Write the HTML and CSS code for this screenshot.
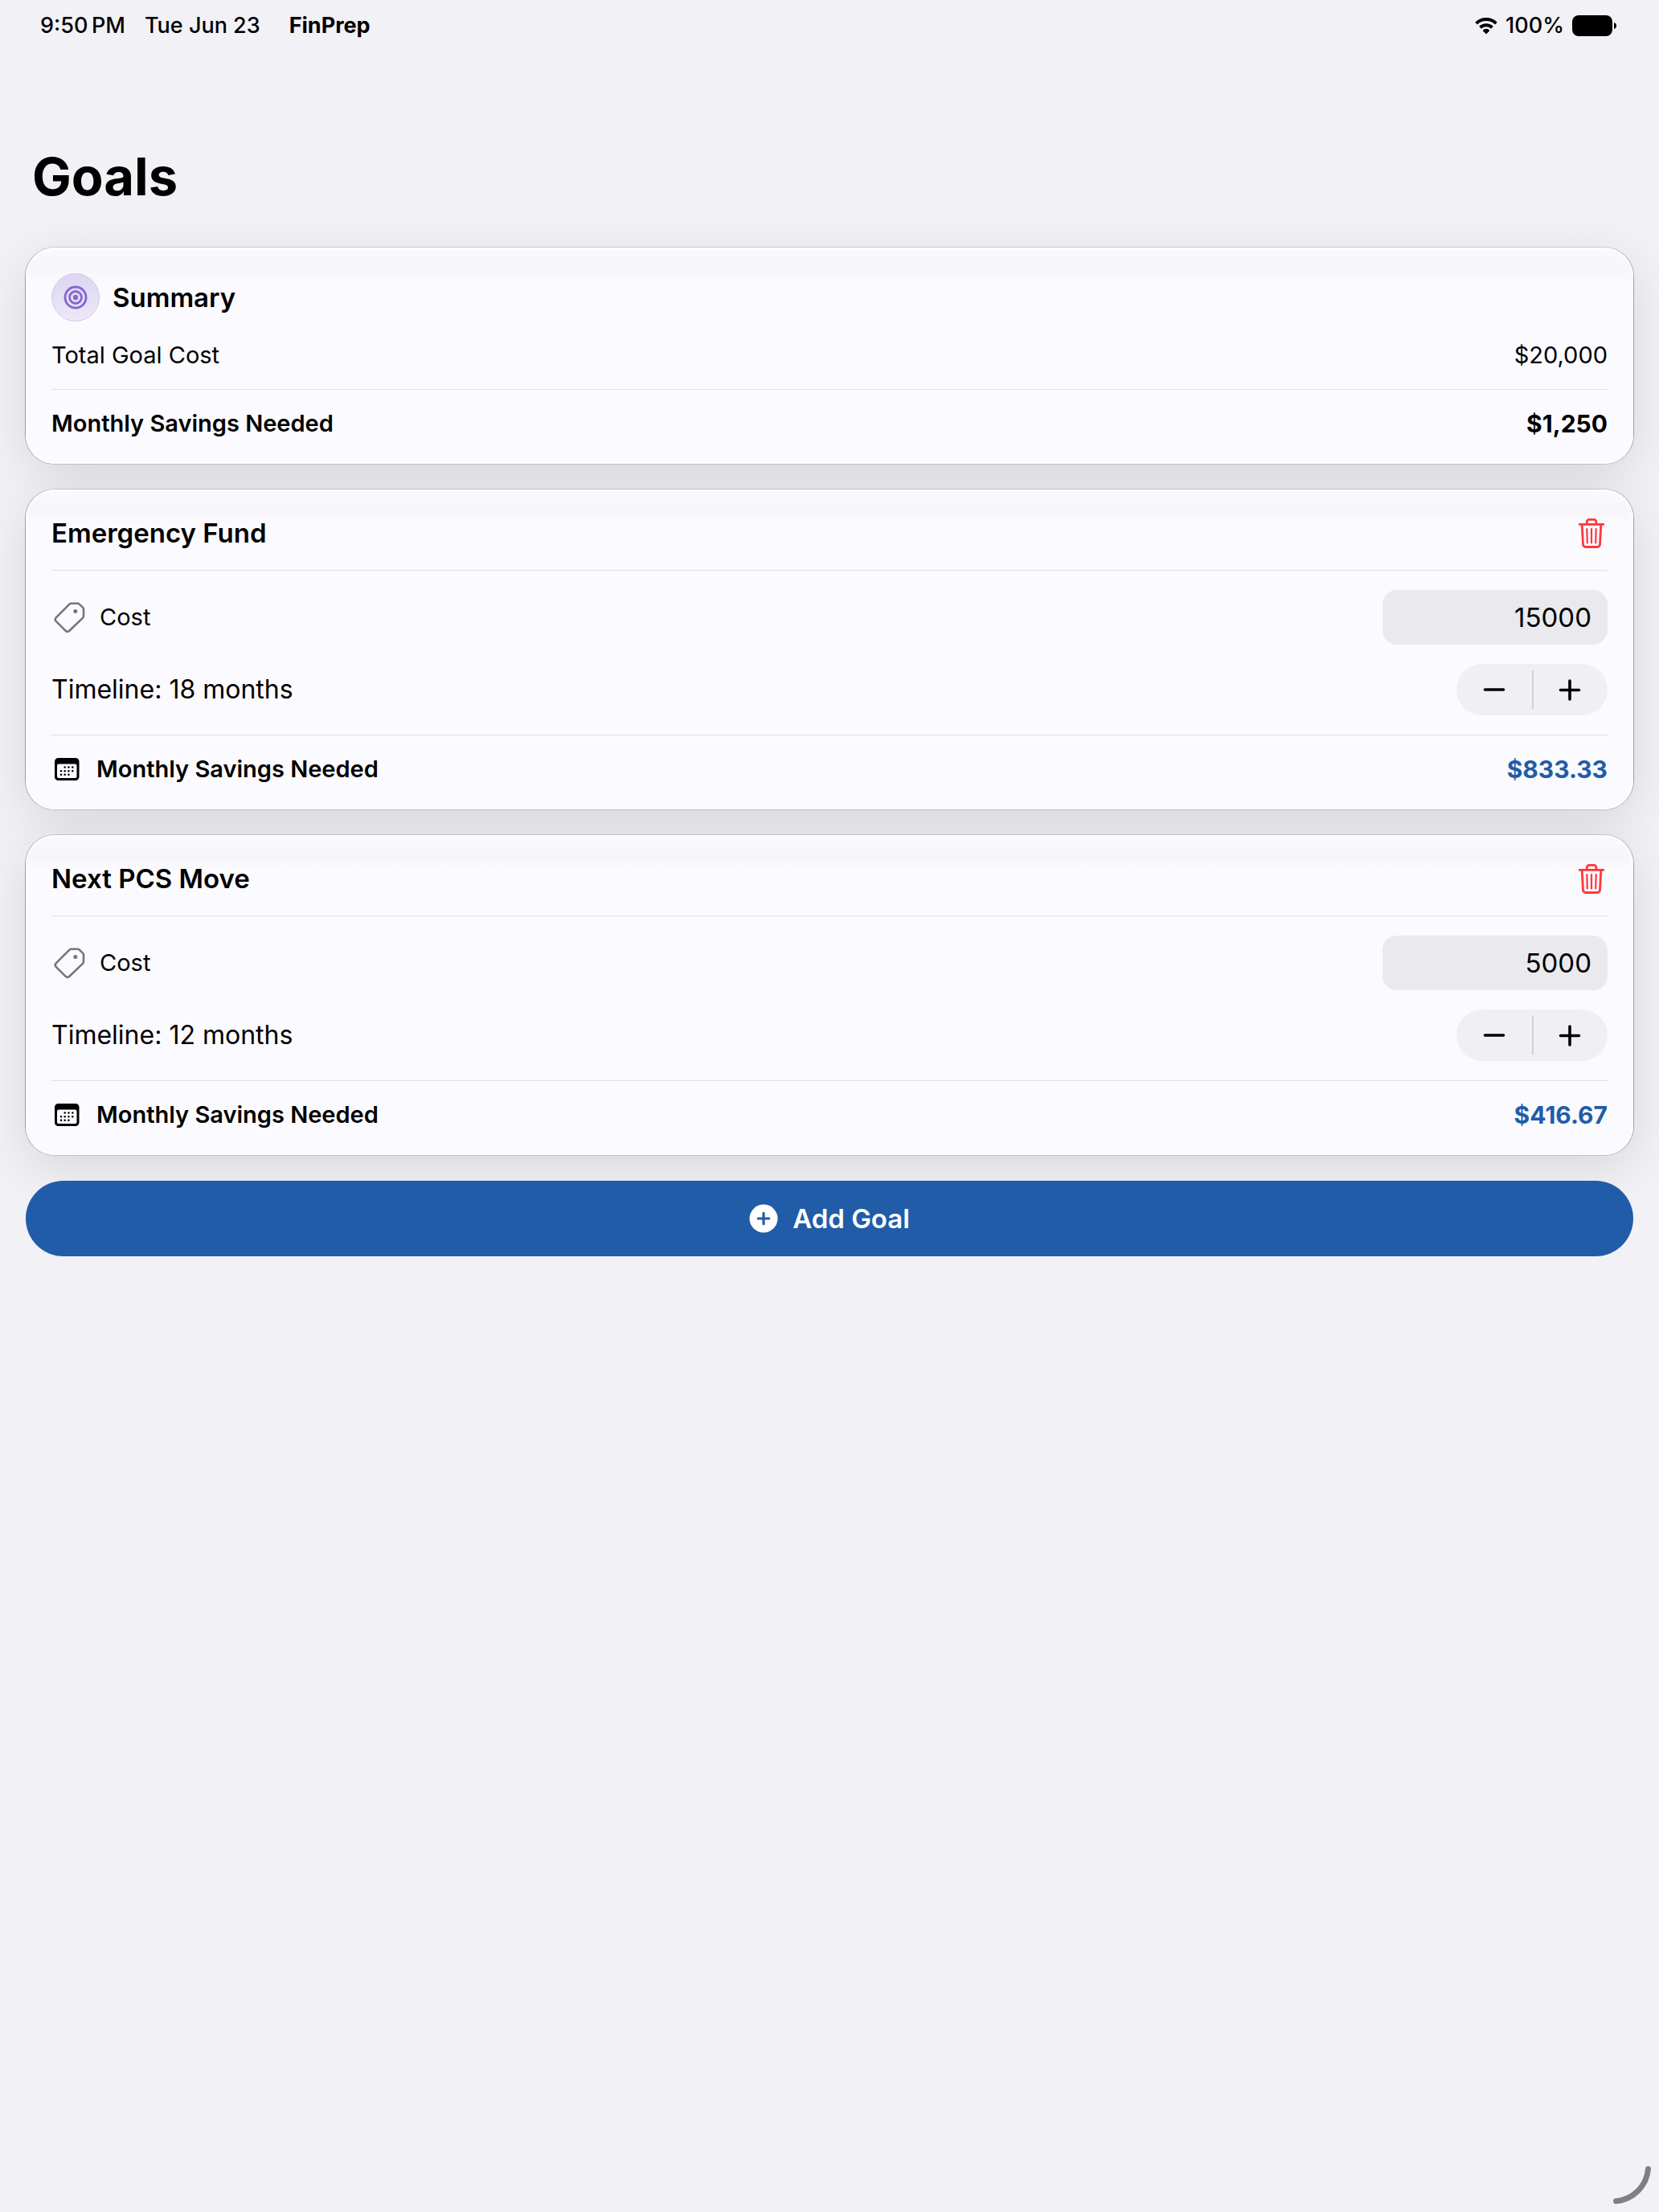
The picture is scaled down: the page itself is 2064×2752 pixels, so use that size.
FILE: index.html
```html
<!DOCTYPE html>
<html lang="en">
<head>
    <meta charset="UTF-8">
    <meta name="viewport" content="width=device-width, initial-scale=1.0">
    <title>FinPrep - Goals</title>
    <link rel="stylesheet" href="styles.css">
</head>
<body>
    <!-- icons shared by the goal cards -->
    <svg class="sprite" aria-hidden="true">
        <symbol id="icon-trash" viewBox="0 0 40 44">
            <g fill="none" stroke="currentColor" stroke-width="2.8" stroke-linecap="round" stroke-linejoin="round">
                <path d="M5.2 11.400h29.600"/>
                <path d="M14.300 11V8.200a2.800 2.800 0 0 1 2.800-2.800h6a2.800 2.800 0 0 1 2.800 2.800V11"/>
                <path d="M8.200 12l1.300 24.400a3.200 3.200 0 0 0 3.200 3.100h14.600a3.200 3.200 0 0 0 3.200-3.100L31.800 12"/>
                <path d="M14.300 17.200l.5 17.200M20 17.200v17.200M25.700 17.200l-.5 17.200" stroke-width="2.2"/>
            </g>
        </symbol>
        <symbol id="icon-tag" viewBox="0 0 44 44">
            <path d="M24.500 4.800h8.200q1.200 0 2 .8l4.400 4.300q.9.900.9 2.200v8.300q0 1.300-.9 2.200L22.300 38.800q-2.300 2-4.600 0L5.700 26.900q-2-2.200 0-4.500L22.400 5.600q.9-.8 2.100-.8z" fill="none" stroke="currentColor" stroke-width="2.600" stroke-linejoin="round"/>
            <circle cx="29.800" cy="14.600" r="2.500" fill="currentColor"/>
        </symbol>
        <symbol id="icon-calendar" viewBox="0 0 40 36">
            <path fill="currentColor" fill-rule="evenodd" d="M8.500 4h21.500a4.500 4.500 0 0 1 4.500 4.500v19a4.500 4.500 0 0 1-4.500 4.500H8.500a4.500 4.500 0 0 1-4.500-4.500v-19A4.500 4.500 0 0 1 8.500 4zM9 11.500a2 2 0 0 0-2 2V27a2 2 0 0 0 2 2h20.500a2 2 0 0 0 2-2V13.500a2 2 0 0 0-2-2z"/>
            <path fill="none" stroke="currentColor" stroke-width="2.600" stroke-linecap="round" d="M16.700 15.500h0M21.400 15.500h0M26.300 15.500h0M12 20.200h0M16.700 20.200h0M21.400 20.200h0M26.300 20.200h0M12 24.800h0M16.700 24.800h0M21.400 24.800h0"/>
        </symbol>
        <symbol id="icon-minus" viewBox="0 0 32 32">
            <path d="M4.500 16h23" stroke="currentColor" stroke-width="3.600" stroke-linecap="round"/>
        </symbol>
        <symbol id="icon-plus" viewBox="0 0 32 32">
            <path d="M4.500 16.500h23M16 5v23" stroke="currentColor" stroke-width="3.600" stroke-linecap="round"/>
        </symbol>
    </svg>

    <header class="status-bar">
        <div class="status-left">
            <span>9:50&#8201;PM</span>
            <span>Tue Jun 23</span>
            <strong class="app-name">FinPrep</strong>
        </div>
        <div class="status-right">
            <svg class="wifi" viewBox="0 0 28 22" aria-hidden="true">
                <g fill="none" stroke="#000" stroke-width="4">
                    <path d="M1.600 8.100a17.800 17.800 0 0 1 24.800 0"/>
                    <path d="M6.500 13.300a10.700 10.700 0 0 1 15 0"/>
                </g>
                <path d="M14 21l-4-4q4-3.400 8 0z" stroke="#000" stroke-width="1" stroke-linejoin="round"/>
            </svg>
            <span>100%</span>
            <svg class="battery" viewBox="0 0 56 26" aria-hidden="true">
                <rect width="50" height="26" rx="8"/>
                <path d="M52 9q3 1 3 4t-3 4z"/>
            </svg>
        </div>
    </header>

    <main>
        <h1>Goals</h1>

        <section class="card">
            <div class="summary-header">
                <span class="badge">
                    <svg viewBox="0 0 30 30" aria-hidden="true">
                        <g fill="none" stroke="currentColor" stroke-width="2.800">
                            <circle cx="15" cy="15" r="13"/>
                            <circle cx="15" cy="15" r="7.500"/>
                        </g>
                        <circle cx="15" cy="15" r="3.200" fill="currentColor"/>
                    </svg>
                </span>
                <h2>Summary</h2>
            </div>
            <div class="row">
                <span>Total Goal Cost</span>
                <span>$20,000</span>
            </div>
            <hr>
            <div class="row total">
                <span>Monthly Savings Needed</span>
                <span class="amount">$1,250</span>
            </div>
        </section>

        <section class="card">
            <div class="goal-header">
                <h2>Emergency Fund</h2>
                <button class="delete" aria-label="Delete Emergency Fund"><svg><use href="#icon-trash"/></svg></button>
            </div>
            <hr>
            <div class="row">
                <label class="with-icon" for="cost-1"><svg class="tag"><use href="#icon-tag"/></svg>Cost</label>
                <input class="cost" id="cost-1" type="text" inputmode="numeric" value="15000">
            </div>
            <div class="row timeline">
                <span>Timeline: 18 months</span>
                <div class="stepper">
                    <button aria-label="Decrease months"><svg><use href="#icon-minus"/></svg></button>
                    <button aria-label="Increase months"><svg><use href="#icon-plus"/></svg></button>
                </div>
            </div>
            <hr>
            <div class="row total">
                <span class="with-icon"><svg class="calendar"><use href="#icon-calendar"/></svg>Monthly Savings Needed</span>
                <span class="amount blue">$833.33</span>
            </div>
        </section>

        <section class="card">
            <div class="goal-header">
                <h2>Next PCS Move</h2>
                <button class="delete" aria-label="Delete Next PCS Move"><svg><use href="#icon-trash"/></svg></button>
            </div>
            <hr>
            <div class="row">
                <label class="with-icon" for="cost-2"><svg class="tag"><use href="#icon-tag"/></svg>Cost</label>
                <input class="cost" id="cost-2" type="text" inputmode="numeric" value="5000">
            </div>
            <div class="row timeline">
                <span>Timeline: 12 months</span>
                <div class="stepper">
                    <button aria-label="Decrease months"><svg><use href="#icon-minus"/></svg></button>
                    <button aria-label="Increase months"><svg><use href="#icon-plus"/></svg></button>
                </div>
            </div>
            <hr>
            <div class="row total">
                <span class="with-icon"><svg class="calendar"><use href="#icon-calendar"/></svg>Monthly Savings Needed</span>
                <span class="amount blue">$416.67</span>
            </div>
        </section>

        <button class="add-goal">
            <svg viewBox="0 0 36 36" aria-hidden="true">
                <circle cx="18" cy="18" r="17.500" fill="#fff"/>
                <path d="M18 11.300v13.400M11.300 18h13.400" stroke="#215ca8" stroke-width="3.200" stroke-linecap="round"/>
            </svg>
            Add Goal
        </button>
    </main>

    <!-- window resize handle -->
    <svg class="resize-handle" viewBox="0 0 60 60" aria-hidden="true">
        <path d="M47.500 7.500A44 44 0 0 1 7.500 47.500" fill="none" stroke="#808080" stroke-width="7" stroke-linecap="round"/>
    </svg>
</body>
</html>
```
FILE: styles.css
```css
:root {
    --bg: #f2f1f6;
    --card: #fbfaff;
    --blue: #215ca8;
    --red: #ff383c;
    --purple: #8468d0;
    --line: #dfdee3;
}

* {
    box-sizing: border-box;
}

body {
    margin: 0;
    min-height: 100vh;
    background: var(--bg);
    color: #000;
    font-family: Inter, "Liberation Sans", sans-serif;
    font-size: 29px;
    line-height: 36px;
}

button,
input {
    margin: 0;
    padding: 0;
    border: none;
    background: none;
    color: inherit;
    font: inherit;
}

button {
    cursor: pointer;
}

svg {
    display: block;
    flex: none;
}

.sprite {
    position: absolute;
    width: 0;
    height: 0;
}

/* status bar */
.status-bar {
    display: flex;
    justify-content: space-between;
    align-items: center;
    height: 64px;
    padding: 0 52px 0 50px;
    font-size: 27px;
    font-weight: 500;
}

.status-left {
    display: flex;
    gap: 24px;
}

.app-name {
    margin-left: 12px;
    font-weight: 700;
}

.status-right {
    display: flex;
    align-items: center;
    gap: 10px;
}

.wifi {
    width: 28px;
    height: 22px;
}

.battery {
    width: 56px;
    height: 26px;
}

/* page */
main {
    display: flex;
    flex-direction: column;
    gap: 32px;
    padding: 116px 32px 32px;
    isolation: isolate;
}

h1 {
    margin: 0 8px 16px;
    font-size: 65px;
    line-height: 80px;
    font-weight: 700;
}

h2 {
    margin: 0;
    font-size: 33px;
    line-height: 44px;
    font-weight: 600;
}

hr {
    width: 100%;
    height: 1px;
    margin: 0;
    border: none;
    background: var(--line);
}

.card {
    position: relative;
    display: flex;
    flex-direction: column;
    gap: 24px;
    padding: 32px;
    border-radius: 36px;
    background: linear-gradient(to bottom, #fafafd 0, #f6f5fa 26px, var(--card) 44px);
    box-shadow:
        inset 0 0 2px 1px #fff,
        inset 0 0 12px rgba(255, 255, 255, 0.5),
        0 0 0 1px rgba(0, 0, 0, 0.14),
        1px 0 0 rgba(0, 0, 0, 0.2),
        -1px 0 0 rgba(0, 0, 0, 0.2);
}

/* drop shadow sits behind every card */
.card::before {
    content: '';
    position: absolute;
    inset: 0;
    z-index: -1;
    border-radius: 36px;
    box-shadow: 0 16px 64px rgba(0, 0, 0, 0.11);
}

.summary-header {
    display: flex;
    align-items: center;
    gap: 16px;
}

.badge {
    display: flex;
    justify-content: center;
    align-items: center;
    width: 60px;
    height: 60px;
    border: 1px solid #d0c8ee;
    border-radius: 50%;
    background: linear-gradient(to bottom, #dcd6f1, #ece8f8);
    color: var(--purple);
}

.badge svg {
    width: 30px;
    height: 30px;
}

.goal-header,
.row {
    display: flex;
    justify-content: space-between;
    align-items: center;
}

.delete {
    color: var(--red);
}

.delete svg {
    width: 40px;
    height: 44px;
}

.with-icon {
    display: flex;
    align-items: center;
    gap: 16px;
}

.tag {
    width: 44px;
    height: 44px;
    color: #76767a;
}

.calendar {
    width: 40px;
    height: 36px;
}

.cost {
    width: 280px;
    height: 68px;
    padding: 0 20px;
    border-radius: 18px;
    background: #eae9ee;
    font-size: 33px;
    text-align: right;
}

.timeline {
    font-size: 32px;
}

.stepper {
    display: flex;
    width: 188px;
    height: 64px;
    border-radius: 32px;
    background: #f0eff4;
}

.stepper button {
    display: flex;
    flex: 1;
    justify-content: center;
    align-items: center;
}

.stepper button + button {
    background: linear-gradient(#d2d1d6, #d2d1d6) left center / 2px 48px no-repeat;
}

.stepper svg {
    width: 32px;
    height: 32px;
}

.total {
    font-weight: 600;
}

.amount {
    font-size: 30px;
    font-weight: 700;
}

.blue {
    color: var(--blue);
}

.add-goal {
    display: flex;
    justify-content: center;
    align-items: center;
    gap: 18px;
    height: 94px;
    border-radius: 47px;
    background: var(--blue);
    color: #fff;
    font-size: 33px;
    font-weight: 600;
}

.add-goal svg {
    width: 36px;
    height: 36px;
}

.resize-handle {
    position: fixed;
    right: 1px;
    bottom: 1px;
    width: 60px;
    height: 60px;
}
```
